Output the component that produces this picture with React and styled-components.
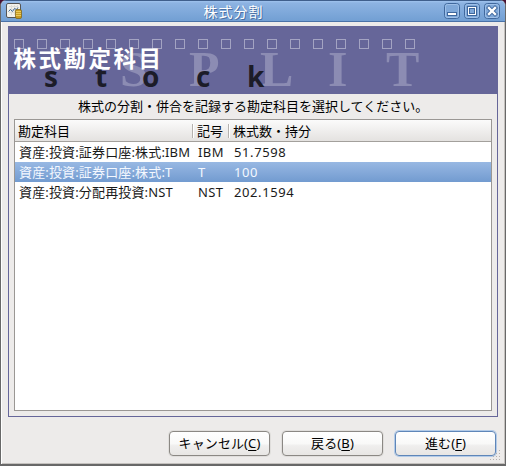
import React, { useState } from 'react'
import styled, { createGlobalStyle, css } from 'styled-components'

const GlobalStyle = createGlobalStyle`
  *, *::before, *::after {
    box-sizing: border-box;
  }

  body {
    margin: 0;
    background: #4a1034;
    overflow: hidden;
  }
`

const Window = styled.div`
  display: flex;
  flex-direction: column;
  width: 506px;
  height: 466px;
  border: 1px solid #686868;
  border-top: 0;
  border-radius: 6px 6px 0 0;
  background: #edebea;
  color: #000;
  font-family: 'Noto Sans', 'Noto Sans CJK JP', sans-serif;
  font-size: 13px;
  overflow: hidden;
`

const TitleBar = styled.header`
  display: flex;
  align-items: center;
  flex: none;
  height: 22px;
  padding: 0 5px;
  border-top: 1px solid #3f5f8c;
  border-bottom: 1px solid #4a72a8;
  background: linear-gradient(#9fc3ee 0, #8db3e2 2px, #729fd3 100%);
`

const WindowTitle = styled.h1`
  flex: 1;
  margin: 0;
  color: #fff;
  font-family: 'Noto Sans CJK JP', sans-serif;
  font-size: 14px;
  font-weight: 400;
  letter-spacing: 1px;
  line-height: 18px;
  text-align: center;
  text-shadow: 1px 1px 0 #4a6fa3;
`

const WindowButtons = styled.div`
  display: flex;
  gap: 4px;
`

const WindowButton = styled.button`
  display: block;
  width: 16px;
  height: 16px;
  padding: 0;
  border: 0;
  background: none;

  svg {
    display: block;
  }
`

const Body = styled.main`
  display: flex;
  flex-direction: column;
  flex: 1;
  padding: 4px 7px 0;
  border-bottom: 1px solid #686868;
  box-shadow: inset 1px 0 0 #fff, inset -1px -1px 0 #c4c1be;
`

const Page = styled.section`
  display: flex;
  flex-direction: column;
  height: 391px;
  border: 1px solid #666699;
  border-top: 0;
`

const Banner = styled.svg`
  display: block;
  flex: none;
  width: 490px;
  height: 68px;
  margin: 0 -1px;
  background: #666699;
`

const Prompt = styled.p`
  margin: 0;
  padding-left: 69px;
  height: 25px;
  font-family: 'Noto Sans CJK JP', sans-serif;
  line-height: 24px;
  white-space: nowrap;
`

const AccountList = styled.div`
  flex: 1;
  margin: 0 5px 5px;
  border: 1px solid #9a9794;
  background: #fff;
`

const columns = css`
  display: grid;
  grid-template-columns: 179px 36px 1fr;
  white-space: nowrap;
`

const ListHeader = styled.div`
  ${columns}
  height: 22px;
  border-bottom: 1px solid #a3a09c;
  background: linear-gradient(#fbfbfb, #e4e2e0);
  font-family: 'Noto Sans CJK JP', sans-serif;
  line-height: 22px;
`

const HeaderCell = styled.div`
  position: relative;
  padding-left: 3px;

  &:not(:last-child)::after {
    content: '';
    position: absolute;
    top: 4px;
    right: 0;
    width: 2px;
    height: 14px;
    border-left: 1px solid #b5b2af;
    background: #fff;
  }
`

const Row = styled.div`
  ${columns}
  height: 20px;
  color: ${({ $selected }) => ($selected ? '#f4f8ff' : '#1a1a1a')};
  background: ${({ $selected }) => ($selected ? 'linear-gradient(#98b8e3, #729bd0)' : '#fff')};
  line-height: 20px;
  cursor: default;
`

const Cell = styled.div`
  padding-left: 4px;
  letter-spacing: ${({ $number }) => ($number ? 0.6 : 0.15)}px;
`

const Symbol = styled(Cell)`
  letter-spacing: 0.4px;
`

const Actions = styled.footer`
  display: flex;
  justify-content: flex-end;
  gap: 12px;
  padding: 14px 0 0;
  margin-right: 2px;
`

const Button = styled.button`
  width: 101px;
  height: 25px;
  padding: 0 0 1px;
  border: 1px solid ${({ $primary }) => ($primary ? '#5f86b8' : '#8b8884')};
  border-radius: 4px;
  background: linear-gradient(#fff 0, #f9f9f8 50%, #efeeed 60%, #e8e6e4 100%);
  box-shadow: ${({ $primary }) => ($primary ? '0 0 0 1px #b3cbe8' : '0 0 0 1px #e0dedc')};
  color: #000;
  font-family: 'Noto Sans', 'Noto Sans CJK JP', sans-serif;
  font-size: 13px;
  letter-spacing: 0.1px;
  line-height: 20px;
  white-space: nowrap;

  u {
    text-underline-offset: 2px;
  }
`

const ResizeGrip = styled.svg`
  position: absolute;
  left: 490px;
  top: 450px;
`

const accounts = [
  { name: '資産:投資:証券口座:株式:IBM', symbol: 'IBM', shares: '51.7598' },
  { name: '資産:投資:証券口座:株式:T', symbol: 'T', shares: '100' },
  { name: '資産:投資:分配再投資:NST', symbol: 'NST', shares: '202.1594' },
]

const splitLetters = [['S', 112], ['P', 181], ['L', 252], ['I', 320], ['T', 378]]
const stockLetters = [['s', 36], ['t', 87], ['o', 134], ['c', 188], ['k', 239]]

const AppIcon = () => (
  <svg width="17" height="18" viewBox="0 0 17 18">
    <rect x="0.5" y="1.5" width="14" height="14" rx="1.5" fill="#f2f1ec" stroke="#555" />
    <path d="M3 4.5h9M3 7.5h9M3 10.5h7M5.5 3v10M8.5 3v10M11.5 3v7" stroke="#deded9" />
    <path d="M2.5 9.5l2-2 2 2 2-3 2 1 1.5-2" fill="none" stroke="#426b96" />
    <rect x="9.5" y="7.5" width="6" height="9" rx="1.5" fill="#c79b22" stroke="#7c6212" strokeWidth="0.7" />
    <path d="M10 9.5h5M10 11.5h5M10 13.5h5" stroke="#f3d66a" strokeWidth="0.8" />
  </svg>
)

function ControlIcon({ kind }) {
  return (
    <svg width="16" height="16" viewBox="0 0 16 16">
      <rect x="0.5" y="0.5" width="15" height="15" rx="3" fill="#7fa8d9" stroke="#40689d" />
      <rect x="1.5" y="1.5" width="13" height="13" rx="2" fill="none" stroke="#9fc0e8" />
      {kind === 'minimize' && (
        <rect x="3.5" y="9.5" width="9" height="3" fill="#fff" stroke="#40689d" />
      )}
      {kind === 'maximize' && (
        <>
          <rect x="3.5" y="3.5" width="9" height="9" fill="#fff" stroke="#40689d" />
          <rect x="5.5" y="5.5" width="5" height="5" fill="#7fa8d9" stroke="#40689d" />
        </>
      )}
      {kind === 'close' && (
        <>
          <path d="M5 5l6 6M11 5l-6 6" stroke="#40689d" strokeWidth="4.2" strokeLinecap="square" />
          <path d="M5 5l6 6M11 5l-6 6" stroke="#fff" strokeWidth="2.4" strokeLinecap="square" />
        </>
      )}
    </svg>
  )
}

function SplitBanner() {
  return (
    <Banner viewBox="0 0 490 68">
      {Array.from({ length: 18 }, (_, i) => (
        <rect key={i} x={6.5 + i * 23} y="13.5" width="9" height="9" fill="none" stroke="#a3a3c2" />
      ))}
      <g fill="#8c8cb3" fontFamily="Liberation Serif, serif" fontSize="50" fontWeight="700">
        {splitLetters.map(([letter, x]) => (
          <text key={letter} x={x} y="60">{letter}</text>
        ))}
      </g>
      <g fill="#1c1c28" fontFamily="Open Sans, DejaVu Sans, sans-serif" fontSize="28" fontWeight="700">
        {stockLetters.map(([letter, x]) => (
          <text key={letter} x={x} y="61">{letter}</text>
        ))}
      </g>
      <text x="5.5" y="41" fill="#fff" fontFamily="Noto Sans CJK JP, sans-serif" fontSize="22.5" fontWeight="700" letterSpacing="2.5">
        株式勘定科目
      </text>
    </Banner>
  )
}

export default function App() {
  const [selected, setSelected] = useState(1)

  return (
    <>
      <GlobalStyle />
      <Window>
        <TitleBar>
          <AppIcon />
          <WindowTitle>株式分割</WindowTitle>
          <WindowButtons>
            {['minimize', 'maximize', 'close'].map(kind => (
              <WindowButton key={kind} aria-label={kind}>
                <ControlIcon kind={kind} />
              </WindowButton>
            ))}
          </WindowButtons>
        </TitleBar>
        <Body>
          <Page>
            <SplitBanner />
            <Prompt>株式の分割・併合を記録する勘定科目を選択してください。</Prompt>
            <AccountList>
              <ListHeader>
                <HeaderCell>勘定科目</HeaderCell>
                <HeaderCell>記号</HeaderCell>
                <HeaderCell>株式数・持分</HeaderCell>
              </ListHeader>
              {accounts.map((account, i) => (
                <Row key={account.name} $selected={i === selected} onClick={() => setSelected(i)}>
                  <Cell>{account.name}</Cell>
                  <Symbol>{account.symbol}</Symbol>
                  <Cell $number>{account.shares}</Cell>
                </Row>
              ))}
            </AccountList>
          </Page>
          <Actions>
            <Button>キャンセル(<u>C</u>)</Button>
            <Button>戻る(<u>B</u>)</Button>
            <Button $primary>進む(<u>F</u>)</Button>
          </Actions>
        </Body>
        <ResizeGrip width="12" height="12" viewBox="0 0 12 12" fill="#b5b2af">
          {[0, 1, 2, 3].map(row =>
            Array.from({ length: row + 1 }, (_, i) => (
              <rect key={`${row}-${i}`} x={9 - i * 3} y={row * 3} width="1" height="1" />
            ))
          )}
        </ResizeGrip>
      </Window>
    </>
  )
}
